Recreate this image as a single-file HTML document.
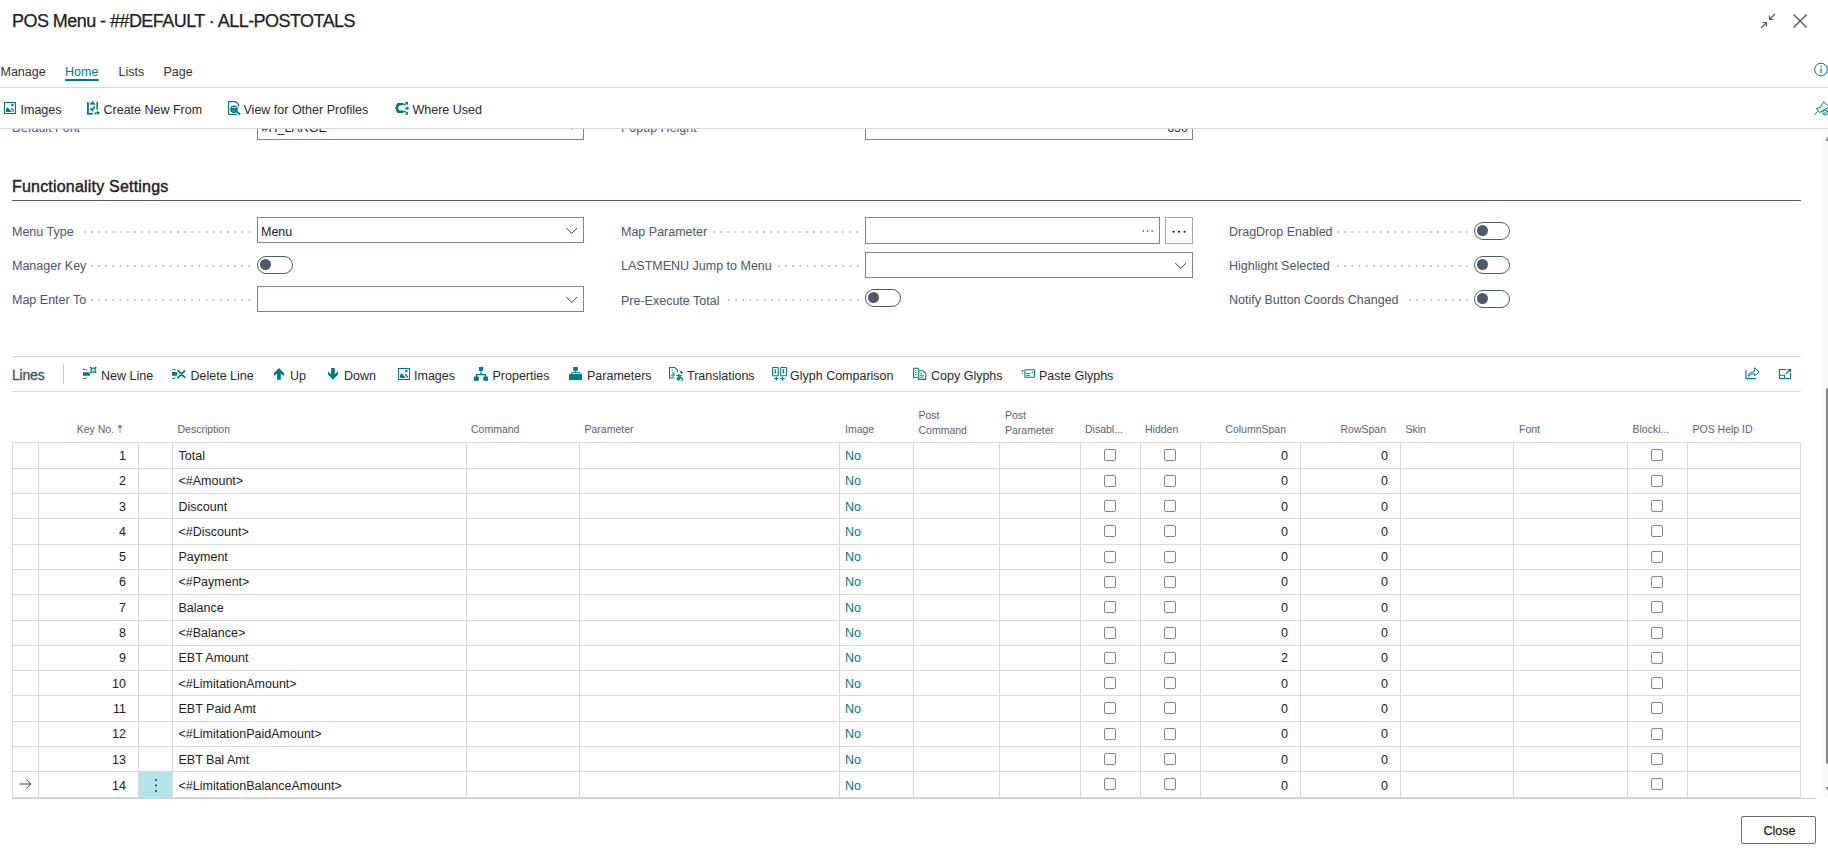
<!DOCTYPE html>
<html><head><meta charset="utf-8"><title>POS Menu</title>
<style>
html,body{margin:0;padding:0;background:#fff;}
body{width:1828px;height:864px;overflow:hidden;position:relative;font-family:"Liberation Sans",sans-serif;}
.t{position:absolute;white-space:nowrap;font-family:"Liberation Sans",sans-serif;}
.r{position:absolute;display:block;}
</style></head><body>
<div class="t" style="left:12px;top:12px;font-size:18px;line-height:18px;color:#212121;letter-spacing:-0.55px;-webkit-text-stroke:0.25px #212121;">POS Menu - ##DEFAULT · ALL-POSTOTALS</div>
<svg class="r" style="left:1760px;top:13px" width="16" height="16" viewBox="0 0 16 16"><g stroke="#5a5a5a" stroke-width="1.2" fill="none"><path d="M1 15 L6.5 9.5 M2.5 9.5 H6.5 V13.5"/><path d="M15 1 L9.5 6.5 M9.5 2.5 V6.5 H13.5"/></g></svg>
<svg class="r" style="left:1792px;top:13px" width="17" height="17" viewBox="0 0 17 17"><g stroke="#5a5a5a" stroke-width="1.4"><path d="M1.6 1.6 L14.6 14.6 M14.6 1.6 L1.6 14.6"/></g></svg>
<div class="t" style="left:0.5px;top:66px;font-size:12.5px;line-height:12.5px;color:#333;">Manage</div>
<div class="t" style="left:65px;top:66px;font-size:12.5px;line-height:12.5px;color:#007a82;">Home</div>
<div class="r" style="left:65px;top:79px;width:34px;height:2px;background:#007a82;border-radius:1px"></div>
<div class="t" style="left:118.5px;top:66px;font-size:12.5px;line-height:12.5px;color:#333;">Lists</div>
<div class="t" style="left:163.5px;top:66px;font-size:12.5px;line-height:12.5px;color:#333;">Page</div>
<svg class="r" style="left:1813px;top:62px" width="15" height="15" viewBox="0 0 15 15"><circle cx="8" cy="7.5" r="6.3" stroke="#007a82" stroke-width="1" fill="none"/><path d="M8 6.3 V11" stroke="#007a82" stroke-width="1.1"/><circle cx="8" cy="4.4" r="0.75" fill="#007a82"/></svg>
<div class="r" style="left:0px;top:87px;width:1828px;height:1px;background:#d6d9dd"></div>
<svg class="r" style="left:4px;top:102px" width="13" height="13" viewBox="0 0 13 13"><rect x="0.5" y="0.5" width="11" height="11" fill="none" stroke="#007a82" stroke-width="1"/><path d="M2 10 V7.2 L3.5 5.2 L7.6 9.6 V10 Z" fill="#007a82"/><path d="M7.6 6.6 L9.4 9" stroke="#007a82" stroke-width="1.4" stroke-linecap="round"/><circle cx="8.4" cy="3" r="1.25" fill="#007a82"/></svg>
<div class="t" style="left:20.5px;top:104px;font-size:12.5px;line-height:12.5px;color:#2a2a2a;">Images</div>
<svg class="r" style="left:84px;top:98px" width="20" height="20" viewBox="0 0 20 20"><path d="M3.9 4 V15.9 H8.8" fill="none" stroke="#007a82" stroke-width="1.9"/><path d="M13.2 4 V11.7" fill="none" stroke="#007a82" stroke-width="1.6"/><path d="M6 6.3 L7 5 H7.6 L8.4 3 L9.2 5 H10 L11.3 6.3 Z" fill="#007a82" stroke="#007a82" stroke-width="0.6"/><path d="M6.5 10.4 L8.2 12.1 L10.8 8.6" fill="none" stroke="#007a82" stroke-width="1.7"/><path d="M10.4 16.6 V15.2 Q10.6 14.2 12.2 14.2 H13 V12.8 L16.2 14.8 L13 16.8 V15.6 H12.3 Q11.8 15.6 11.8 16.6 Z" fill="#007a82"/></svg>
<div class="t" style="left:103.5px;top:104px;font-size:12.5px;line-height:12.5px;color:#2a2a2a;">Create New From</div>
<svg class="r" style="left:224px;top:98px" width="20" height="20" viewBox="0 0 20 20"><path d="M4.5 16.5 V3.6 H11.6 L14.5 6.5 V8.5" fill="none" stroke="#007a82" stroke-width="1.2"/><path d="M4.5 16.4 H12.8" fill="none" stroke="#007a82" stroke-width="1.2"/><circle cx="10" cy="11.2" r="3.8" fill="#007a82"/><path d="M8 9.6 H12" stroke="#fff" stroke-width="0.9"/><path d="M8.2 12.8 H11.8" stroke="#7fb9bc" stroke-width="0.9"/><path d="M12.8 13.8 L16.2 16.4" stroke="#007a82" stroke-width="1.9"/></svg>
<div class="t" style="left:243.5px;top:104px;font-size:12.5px;line-height:12.5px;color:#2a2a2a;">View for Other Profiles</div>
<svg class="r" style="left:392px;top:98px" width="20" height="20" viewBox="0 0 20 20"><path d="M5.3 4.9 H11.6 V7.3 H9 A2.65 2.65 0 0 0 9 12.6 H11.6 V14.9 H5.3 L3.1 9.9 Z" fill="#007a82"/><path d="M11.8 7.2 L14.6 5.2 M12.5 10.3 H15.5 M11.8 12.7 L14.6 14.8" stroke="#007a82" stroke-width="1.1" fill="none"/><path d="M12.8 4 H16 V7.2 Z M14.6 8 L17.2 10.3 L14.6 12.6 Z M12.8 16.8 H16 V13.6 Z" fill="#007a82"/></svg>
<div class="t" style="left:412.5px;top:104px;font-size:12.5px;line-height:12.5px;color:#2a2a2a;">Where Used</div>
<svg class="r" style="left:1808px;top:98px" width="20" height="20" viewBox="0 0 20 20"><path d="M6.4 16.9 L10.2 13.1" stroke="#007a82" stroke-width="1"/><path d="M8.4 10.4 L12.2 9.6 L15.6 3.9 L21 9 L16.3 11.6 L11.6 14.6 Z" fill="none" stroke="#007a82" stroke-width="1" stroke-linejoin="round"/><circle cx="17.2" cy="14.4" r="2.5" fill="#fff" stroke="#007a82" stroke-width="1"/><path d="M15.5 16.1 L18.9 12.7" stroke="#007a82" stroke-width="1"/></svg>
<div class="r" style="left:0px;top:128px;width:1828px;height:1px;background:#d6d9dd"></div>
<div class="r" style="left:0;top:129px;width:1822px;height:735px;overflow:hidden"><div class="r" style="left:0;top:-129px;width:1828px;height:864px">
<div class="t" style="left:12px;top:122px;font-size:12.5px;line-height:12.5px;color:#4b5668;">Default Font</div>
<div class="r" style="left:257px;top:113px;width:327px;height:27px;border:1px solid #7d8694;box-sizing:border-box"></div>
<div class="t" style="left:261.5px;top:122px;font-size:12.5px;line-height:12.5px;color:#212121;">#H_LARGE</div>
<svg class="r" style="left:566px;top:123px" width="12" height="8" viewBox="0 0 12 8"><path d="M0.4 1.1 L5.7 6.4 L11 1.1" fill="none" stroke="#3c3f45" stroke-width="1"/></svg>
<div class="t" style="left:621px;top:122px;font-size:12.5px;line-height:12.5px;color:#4b5668;">Popup Height</div>
<div class="r" style="left:865px;top:113px;width:328px;height:27px;border:1px solid #7d8694;box-sizing:border-box"></div>
<div class="t" style="right:640px;top:122px;font-size:12.5px;line-height:12.5px;color:#212121;">650</div>
<div class="t" style="left:12px;top:179px;font-size:16px;line-height:16px;color:#212121;letter-spacing:0.2px;-webkit-text-stroke:0.4px #212121;">Functionality Settings</div>
<div class="r" style="left:12px;top:200px;width:1789px;height:1px;background:#505c6d"></div>
<div class="t" style="left:12px;top:226px;font-size:12.5px;line-height:12.5px;color:#4b5668;">Menu Type</div>
<div class="r" style="left:84px;top:230.5px;width:166px;height:2px;background-image:radial-gradient(circle at 1px 1px,#c3c7cc 0.8px,transparent 1.2px);background-size:7.17px 2px;background-repeat:repeat-x"></div>
<div class="r" style="left:257px;top:217px;width:327px;height:26px;border:1px solid #7d8694;box-sizing:border-box"></div>
<svg class="r" style="left:566px;top:227px" width="12" height="8" viewBox="0 0 12 8"><path d="M0.4 1.1 L5.7 6.4 L11 1.1" fill="none" stroke="#3c3f45" stroke-width="1"/></svg>
<div class="t" style="left:261px;top:226px;font-size:12.5px;line-height:12.5px;color:#212121;">Menu</div>
<div class="t" style="left:12px;top:260px;font-size:12.5px;line-height:12.5px;color:#4b5668;">Manager Key</div>
<div class="r" style="left:91px;top:264.5px;width:159px;height:2px;background-image:radial-gradient(circle at 1px 1px,#c3c7cc 0.8px,transparent 1.2px);background-size:7.17px 2px;background-repeat:repeat-x"></div>
<div class="r" style="left:257px;top:256px;width:36px;height:18px;border:1.4px solid #4e5a6b;border-radius:9px;box-sizing:border-box"></div>
<div class="r" style="left:260px;top:259px;width:11px;height:11px;background:#4e5a6b;border-radius:50%"></div>
<div class="t" style="left:12px;top:294px;font-size:12.5px;line-height:12.5px;color:#4b5668;">Map Enter To</div>
<div class="r" style="left:91px;top:298.5px;width:159px;height:2px;background-image:radial-gradient(circle at 1px 1px,#c3c7cc 0.8px,transparent 1.2px);background-size:7.17px 2px;background-repeat:repeat-x"></div>
<div class="r" style="left:257px;top:286px;width:327px;height:26px;border:1px solid #7d8694;box-sizing:border-box"></div>
<svg class="r" style="left:566px;top:296px" width="12" height="8" viewBox="0 0 12 8"><path d="M0.4 1.1 L5.7 6.4 L11 1.1" fill="none" stroke="#3c3f45" stroke-width="1"/></svg>
<div class="t" style="left:621px;top:226px;font-size:12.5px;line-height:12.5px;color:#4b5668;">Map Parameter</div>
<div class="r" style="left:713px;top:230.5px;width:146px;height:2px;background-image:radial-gradient(circle at 1px 1px,#c3c7cc 0.8px,transparent 1.2px);background-size:7.17px 2px;background-repeat:repeat-x"></div>
<div class="r" style="left:865px;top:217px;width:295px;height:27px;border:1px solid #7d8694;box-sizing:border-box"></div>
<svg class="r" style="left:1141px;top:229px" width="14" height="4" viewBox="0 0 14 4"><circle cx="2.2" cy="2" r="0.75" fill="#222"/><circle cx="6.7" cy="2" r="0.75" fill="#222"/><circle cx="11.2" cy="2" r="0.75" fill="#222"/></svg>
<div class="r" style="left:1165px;top:217px;width:28px;height:27px;border:1px solid #a8a8a8;box-sizing:border-box"></div>
<svg class="r" style="left:1171px;top:229px" width="16" height="5" viewBox="0 0 16 5"><circle cx="2.5" cy="2.7" r="1.05" fill="#111"/><circle cx="8" cy="2.7" r="1.05" fill="#111"/><circle cx="13.5" cy="2.7" r="1.05" fill="#111"/></svg>
<div class="t" style="left:621px;top:260px;font-size:12.5px;line-height:12.5px;color:#4b5668;">LASTMENU Jump to Menu</div>
<div class="r" style="left:778px;top:264.5px;width:81px;height:2px;background-image:radial-gradient(circle at 1px 1px,#c3c7cc 0.8px,transparent 1.2px);background-size:7.17px 2px;background-repeat:repeat-x"></div>
<div class="r" style="left:865px;top:252px;width:328px;height:26px;border:1px solid #7d8694;box-sizing:border-box"></div>
<svg class="r" style="left:1175px;top:262px" width="12" height="8" viewBox="0 0 12 8"><path d="M0.4 1.1 L5.7 6.4 L11 1.1" fill="none" stroke="#3c3f45" stroke-width="1"/></svg>
<div class="t" style="left:621px;top:295px;font-size:12.5px;line-height:12.5px;color:#4b5668;">Pre-Execute Total</div>
<div class="r" style="left:728px;top:298.5px;width:131px;height:2px;background-image:radial-gradient(circle at 1px 1px,#c3c7cc 0.8px,transparent 1.2px);background-size:7.17px 2px;background-repeat:repeat-x"></div>
<div class="r" style="left:865px;top:289px;width:36px;height:18px;border:1.4px solid #4e5a6b;border-radius:9px;box-sizing:border-box"></div>
<div class="r" style="left:868px;top:292px;width:11px;height:11px;background:#4e5a6b;border-radius:50%"></div>
<div class="t" style="left:1229px;top:226px;font-size:12.5px;line-height:12.5px;color:#4b5668;">DragDrop Enabled</div>
<div class="r" style="left:1337px;top:230.5px;width:131px;height:2px;background-image:radial-gradient(circle at 1px 1px,#c3c7cc 0.8px,transparent 1.2px);background-size:7.17px 2px;background-repeat:repeat-x"></div>
<div class="r" style="left:1474px;top:222px;width:36px;height:18px;border:1.4px solid #4e5a6b;border-radius:9px;box-sizing:border-box"></div>
<div class="r" style="left:1477px;top:225px;width:11px;height:11px;background:#4e5a6b;border-radius:50%"></div>
<div class="t" style="left:1229px;top:260px;font-size:12.5px;line-height:12.5px;color:#4b5668;">Highlight Selected</div>
<div class="r" style="left:1337px;top:264.5px;width:131px;height:2px;background-image:radial-gradient(circle at 1px 1px,#c3c7cc 0.8px,transparent 1.2px);background-size:7.17px 2px;background-repeat:repeat-x"></div>
<div class="r" style="left:1474px;top:256px;width:36px;height:18px;border:1.4px solid #4e5a6b;border-radius:9px;box-sizing:border-box"></div>
<div class="r" style="left:1477px;top:259px;width:11px;height:11px;background:#4e5a6b;border-radius:50%"></div>
<div class="t" style="left:1229px;top:294px;font-size:12.5px;line-height:12.5px;color:#4b5668;">Notify Button Coords Changed</div>
<div class="r" style="left:1409px;top:298.5px;width:59px;height:2px;background-image:radial-gradient(circle at 1px 1px,#c3c7cc 0.8px,transparent 1.2px);background-size:7.17px 2px;background-repeat:repeat-x"></div>
<div class="r" style="left:1474px;top:290px;width:36px;height:18px;border:1.4px solid #4e5a6b;border-radius:9px;box-sizing:border-box"></div>
<div class="r" style="left:1477px;top:293px;width:11px;height:11px;background:#4e5a6b;border-radius:50%"></div>
<div class="r" style="left:12px;top:356px;width:1789px;height:1px;background:#d6d9dd"></div>
<div class="r" style="left:12px;top:391px;width:1789px;height:1px;background:#d6d9dd"></div>
<div class="t" style="left:12px;top:368px;font-size:14px;line-height:14px;color:#44505f;letter-spacing:-0.2px;-webkit-text-stroke:0.3px #44505f;">Lines</div>
<div class="r" style="left:63px;top:364px;width:1px;height:20px;background:#c8ccd1"></div>
<svg class="r" style="left:78px;top:362px" width="24" height="22" viewBox="0 0 24 22"><path d="M5.1 7.4 H7.8 Q8.6 7.4 8.7 8.6" fill="none" stroke="#007a82" stroke-width="1"/><path d="M5.1 16.6 H7.8 Q8.6 16.6 8.7 15.4" fill="none" stroke="#007a82" stroke-width="1"/><path d="M5 10.2 H10.6 L12 11.8 V13.8 H5 Z" fill="#007a82"/><rect x="13.3" y="6.2" width="3.9" height="3.9" rx="1.4" fill="none" stroke="#007a82" stroke-width="1.3"/><circle cx="12.6" cy="5.6" r="0.9" fill="#007a82"/><circle cx="17.7" cy="5.6" r="0.9" fill="#007a82"/><circle cx="12.6" cy="10.4" r="0.9" fill="#007a82"/><circle cx="17.7" cy="10.4" r="0.9" fill="#007a82"/></svg>
<div class="t" style="left:101px;top:370px;font-size:12.5px;line-height:12.5px;color:#2a2a2a;">New Line</div>
<svg class="r" style="left:168px;top:362px" width="24" height="22" viewBox="0 0 24 22"><path d="M4.1 7.4 H6.6 Q7.3 7.4 7.3 8.6" fill="none" stroke="#007a82" stroke-width="1"/><path d="M4.1 16.6 H6.6 Q7.3 16.6 7.3 15.4" fill="none" stroke="#007a82" stroke-width="1"/><path d="M4 10 H8.5 L9.8 11.9 L8.5 13.8 H4 Z" fill="#007a82"/><path d="M10 8.6 L16.8 15.4 M16.6 8.9 L10 15.6" stroke="#007a82" stroke-width="1.7" stroke-linecap="round"/></svg>
<div class="t" style="left:190.5px;top:370px;font-size:12.5px;line-height:12.5px;color:#2a2a2a;">Delete Line</div>
<svg class="r" style="left:268px;top:362px" width="24" height="22" viewBox="0 0 24 22"><path d="M11 6 L16 11.1 V14 L12.8 11.6 V17.8 H9.1 V11.6 L6 14 V11.1 Z" fill="#007a82"/></svg>
<div class="t" style="left:290px;top:370px;font-size:12.5px;line-height:12.5px;color:#2a2a2a;">Up</div>
<svg class="r" style="left:322px;top:362px" width="24" height="22" viewBox="0 0 24 22"><path d="M9.1 6 H12.8 V12.2 L16 9.6 V12.6 L11 17.8 L6 12.6 V9.6 L9.1 12.2 Z" fill="#007a82"/></svg>
<div class="t" style="left:344px;top:370px;font-size:12.5px;line-height:12.5px;color:#2a2a2a;">Down</div>
<svg class="r" style="left:398px;top:368px" width="13" height="13" viewBox="0 0 13 13"><rect x="0.5" y="0.5" width="11" height="11" fill="none" stroke="#007a82" stroke-width="1"/><path d="M2 10 V7.2 L3.5 5.2 L7.6 9.6 V10 Z" fill="#007a82"/><path d="M7.6 6.6 L9.4 9" stroke="#007a82" stroke-width="1.4" stroke-linecap="round"/><circle cx="8.4" cy="3" r="1.25" fill="#007a82"/></svg>
<div class="t" style="left:414px;top:370px;font-size:12.5px;line-height:12.5px;color:#2a2a2a;">Images</div>
<svg class="r" style="left:470px;top:362px" width="24" height="22" viewBox="0 0 24 22"><rect x="8.9" y="5" width="4.3" height="3.9" fill="#007a82"/><path d="M11.1 8.9 V12.6 M6.5 15 V12.6 H15.5 V15" fill="none" stroke="#007a82" stroke-width="1.2"/><rect x="4" y="14.6" width="4.8" height="4.2" fill="#007a82"/><rect x="13.3" y="14.6" width="4.7" height="4.2" fill="#007a82"/></svg>
<div class="t" style="left:492.5px;top:370px;font-size:12.5px;line-height:12.5px;color:#2a2a2a;">Properties</div>
<svg class="r" style="left:564px;top:362px" width="24" height="22" viewBox="0 0 24 22"><rect x="9.2" y="5" width="4.7" height="3.8" fill="#007a82"/><path d="M11.6 8.8 V10.5" stroke="#007a82" stroke-width="1.1"/><path d="M7.5 12 V10.5 H16 V12" fill="none" stroke="#007a82" stroke-width="0.9"/><rect x="5" y="12" width="13" height="6" fill="#007a82"/></svg>
<div class="t" style="left:587px;top:370px;font-size:12.5px;line-height:12.5px;color:#2a2a2a;">Parameters</div>
<svg class="r" style="left:664px;top:362px" width="24" height="22" viewBox="0 0 24 22"><path d="M10.5 16 H5.5 V5.5 H10.8 L13.5 8.2 V10.5" fill="none" stroke="#007a82" stroke-width="1.1"/><path d="M7.5 8 H9 M7.8 10.3 H9.5 Q10.2 10.5 10 12 V14 H7.8 Q7.3 12.8 8.5 12.2 H10" fill="none" stroke="#007a82" stroke-width="0.9"/><path d="M15.5 8.5 L17 10 M16.6 9 L18.8 10.5 L17.2 11.8 Z" fill="#007a82" stroke="#007a82" stroke-width="0.8"/><path d="M12.3 13.5 H17.8 M14.4 12 L15.2 18.6 M16.8 14.6 Q13 15 13 17.3 Q13.6 18.5 15.2 17 Q17 15.4 18.2 16.2 Q19.4 17.8 17.2 18.8" fill="none" stroke="#007a82" stroke-width="1.1"/></svg>
<div class="t" style="left:687px;top:370px;font-size:12.5px;line-height:12.5px;color:#2a2a2a;">Translations</div>
<svg class="r" style="left:768px;top:362px" width="24" height="22" viewBox="0 0 24 22"><rect x="4.6" y="5.5" width="5.6" height="8.3" fill="none" stroke="#007a82" stroke-width="1.1" rx="0.5"/><rect x="12.7" y="5.5" width="5.7" height="8.3" fill="none" stroke="#007a82" stroke-width="1.1" rx="0.5"/><path d="M7.3 7 V10.5 M15.5 7 V10.5" stroke="#007a82" stroke-width="1.1"/><path d="M6 10 L7.3 11.8 L8.6 10 Z M14.2 10 L15.5 11.8 L16.8 10 Z" fill="#007a82"/><path d="M8.3 14.8 V18.8 M6.1 16.5 H10.5 M14.5 14.8 V18.8 M12.3 16.5 H16.7" stroke="#007a82" stroke-width="1.1"/></svg>
<div class="t" style="left:790px;top:370px;font-size:12.5px;line-height:12.5px;color:#2a2a2a;">Glyph Comparison</div>
<svg class="r" style="left:909px;top:362px" width="24" height="22" viewBox="0 0 24 22"><path d="M9.2 15.5 H4.6 V6.3 H9.3 V8" fill="none" stroke="#007a82" stroke-width="1.1"/><path d="M6 8.6 H7.4 M6 10.5 H7.6 M6 12.5 H7.6" stroke="#007a82" stroke-width="0.9"/><path d="M9.7 8.7 H14 L16.8 11.3 V17.4 H9.7 Z" fill="none" stroke="#007a82" stroke-width="1.1"/><path d="M11.2 11.5 H12.8 M11.2 13.6 H14.8 M11.2 15.2 H14.8" stroke="#007a82" stroke-width="0.9"/></svg>
<div class="t" style="left:931px;top:370px;font-size:12.5px;line-height:12.5px;color:#2a2a2a;">Copy Glyphs</div>
<svg class="r" style="left:1017px;top:362px" width="24" height="22" viewBox="0 0 24 22"><path d="M4.2 9 H6.8" stroke="#007a82" stroke-width="1.1"/><circle cx="5.6" cy="11.6" r="0.7" fill="#007a82"/><rect x="7.9" y="7.7" width="9.7" height="7.6" rx="0.8" fill="none" stroke="#007a82" stroke-width="1.1"/><path d="M9.4 11.6 H13.6 M9.4 13.6 H12.8" stroke="#007a82" stroke-width="1"/><circle cx="15.4" cy="10.3" r="0.7" fill="#007a82"/></svg>
<div class="t" style="left:1039px;top:370px;font-size:12.5px;line-height:12.5px;color:#2a2a2a;">Paste Glyphs</div>
<svg class="r" style="left:1745px;top:366px" width="16" height="14" viewBox="0 0 16 14"><path d="M1 4.2 V12.6 H11" fill="none" stroke="#007a82" stroke-width="1.1"/><path d="M3.2 10.4 Q3.8 6 9.6 5.7 V1.8 L14.2 5.8 L9.6 9.8 V7.7 Q5.4 7.5 3.2 10.4 Z" fill="none" stroke="#007a82" stroke-width="1" stroke-linejoin="round"/></svg>
<svg class="r" style="left:1778px;top:368px" width="14" height="12" viewBox="0 0 14 12"><path d="M8.2 1.5 H1.5 V10.5 H12.5 V5.3" fill="none" stroke="#007a82" stroke-width="1.1"/><path d="M1.5 7.3 H6.6 V10.5" fill="none" stroke="#007a82" stroke-width="1.1"/><path d="M7.6 6.2 L11.6 2.2" stroke="#007a82" stroke-width="1.1"/><path d="M9.2 0.9 H13.1 V4.8 Z" fill="#007a82"/></svg>
<div class="t" style="right:1714px;top:424px;font-size:10.5px;line-height:10.5px;color:#586375;">Key No.</div>
<svg class="r" style="left:116px;top:424px" width="8" height="10" viewBox="0 0 8 10"><path d="M4 4 V9" stroke="#a0a0a0" stroke-width="1.1"/><path d="M4 0.4 L6.2 3.2 L5.6 3.8 H2.4 L1.8 3.2 Z" fill="#6c6c6c"/></svg>
<div class="t" style="left:177.5px;top:424px;font-size:10.5px;line-height:10.5px;color:#586375;">Description</div>
<div class="t" style="left:471px;top:424px;font-size:10.5px;line-height:10.5px;color:#586375;">Command</div>
<div class="t" style="left:584.5px;top:424px;font-size:10.5px;line-height:10.5px;color:#586375;">Parameter</div>
<div class="t" style="left:845px;top:424px;font-size:10.5px;line-height:10.5px;color:#586375;">Image</div>
<div class="t" style="left:1085px;top:424px;font-size:10.5px;line-height:10.5px;color:#586375;">Disabl...</div>
<div class="t" style="left:1145px;top:424px;font-size:10.5px;line-height:10.5px;color:#586375;">Hidden</div>
<div class="t" style="left:1405.5px;top:424px;font-size:10.5px;line-height:10.5px;color:#586375;">Skin</div>
<div class="t" style="left:1519px;top:424px;font-size:10.5px;line-height:10.5px;color:#586375;">Font</div>
<div class="t" style="left:1632.5px;top:424px;font-size:10.5px;line-height:10.5px;color:#586375;">Blocki...</div>
<div class="t" style="left:1692.5px;top:424px;font-size:10.5px;line-height:10.5px;color:#586375;">POS Help ID</div>
<div class="t" style="left:918.5px;top:410px;font-size:10.5px;line-height:10.5px;color:#586375;">Post</div>
<div class="t" style="left:918.5px;top:425px;font-size:10.5px;line-height:10.5px;color:#586375;">Command</div>
<div class="t" style="left:1005px;top:410px;font-size:10.5px;line-height:10.5px;color:#586375;">Post</div>
<div class="t" style="left:1005px;top:425px;font-size:10.5px;line-height:10.5px;color:#586375;">Parameter</div>
<div class="t" style="right:542px;top:424px;font-size:10.5px;line-height:10.5px;color:#586375;">ColumnSpan</div>
<div class="t" style="right:442px;top:424px;font-size:10.5px;line-height:10.5px;color:#586375;">RowSpan</div>
<div class="r" style="left:139px;top:772px;width:33px;height:25px;background:#b3e4e9"></div>
<div class="r" style="left:12px;top:442px;width:1789px;height:1px;background:#d5d9de"></div>
<div class="r" style="left:12px;top:468px;width:1789px;height:1px;background:#d5d9de"></div>
<div class="r" style="left:12px;top:493px;width:1789px;height:1px;background:#d5d9de"></div>
<div class="r" style="left:12px;top:518px;width:1789px;height:1px;background:#d5d9de"></div>
<div class="r" style="left:12px;top:544px;width:1789px;height:1px;background:#d5d9de"></div>
<div class="r" style="left:12px;top:569px;width:1789px;height:1px;background:#d5d9de"></div>
<div class="r" style="left:12px;top:594px;width:1789px;height:1px;background:#d5d9de"></div>
<div class="r" style="left:12px;top:620px;width:1789px;height:1px;background:#d5d9de"></div>
<div class="r" style="left:12px;top:645px;width:1789px;height:1px;background:#d5d9de"></div>
<div class="r" style="left:12px;top:670px;width:1789px;height:1px;background:#d5d9de"></div>
<div class="r" style="left:12px;top:695px;width:1789px;height:1px;background:#d5d9de"></div>
<div class="r" style="left:12px;top:721px;width:1789px;height:1px;background:#d5d9de"></div>
<div class="r" style="left:12px;top:746px;width:1789px;height:1px;background:#d5d9de"></div>
<div class="r" style="left:12px;top:771px;width:1789px;height:1px;background:#d5d9de"></div>
<div class="r" style="left:12px;top:797px;width:1789px;height:1px;background:#d5d9de"></div>
<div class="r" style="left:12px;top:798px;width:1804px;height:1px;background:#cbcfd4"></div>
<div class="r" style="left:12px;top:442px;width:1px;height:355px;background:#d5d9de"></div>
<div class="r" style="left:38px;top:442px;width:1px;height:355px;background:#d5d9de"></div>
<div class="r" style="left:138px;top:442px;width:1px;height:355px;background:#d5d9de"></div>
<div class="r" style="left:172px;top:442px;width:1px;height:355px;background:#d5d9de"></div>
<div class="r" style="left:466px;top:442px;width:1px;height:355px;background:#d5d9de"></div>
<div class="r" style="left:579px;top:442px;width:1px;height:355px;background:#d5d9de"></div>
<div class="r" style="left:839px;top:442px;width:1px;height:355px;background:#d5d9de"></div>
<div class="r" style="left:913px;top:442px;width:1px;height:355px;background:#d5d9de"></div>
<div class="r" style="left:999px;top:442px;width:1px;height:355px;background:#d5d9de"></div>
<div class="r" style="left:1080px;top:442px;width:1px;height:355px;background:#d5d9de"></div>
<div class="r" style="left:1140px;top:442px;width:1px;height:355px;background:#d5d9de"></div>
<div class="r" style="left:1200px;top:442px;width:1px;height:355px;background:#d5d9de"></div>
<div class="r" style="left:1300px;top:442px;width:1px;height:355px;background:#d5d9de"></div>
<div class="r" style="left:1400px;top:442px;width:1px;height:355px;background:#d5d9de"></div>
<div class="r" style="left:1513px;top:442px;width:1px;height:355px;background:#d5d9de"></div>
<div class="r" style="left:1627px;top:442px;width:1px;height:355px;background:#d5d9de"></div>
<div class="r" style="left:1687px;top:442px;width:1px;height:355px;background:#d5d9de"></div>
<div class="r" style="left:1800px;top:442px;width:1px;height:355px;background:#d5d9de"></div>
<div class="t" style="right:1702px;top:450px;font-size:12.5px;line-height:12.5px;color:#212121;">1</div>
<div class="t" style="left:178.5px;top:450px;font-size:12.5px;line-height:12.5px;color:#212121;">Total</div>
<div class="t" style="left:845px;top:450px;font-size:12.5px;line-height:12.5px;color:#007a82;">No</div>
<div class="t" style="right:540px;top:450px;font-size:12.5px;line-height:12.5px;color:#212121;">0</div>
<div class="t" style="right:440px;top:450px;font-size:12.5px;line-height:12.5px;color:#212121;">0</div>
<div class="r" style="left:1104px;top:449px;width:12px;height:12px;border:1px solid #858585;border-radius:2px;box-sizing:border-box"></div>
<div class="r" style="left:1164px;top:449px;width:12px;height:12px;border:1px solid #858585;border-radius:2px;box-sizing:border-box"></div>
<div class="r" style="left:1651px;top:449px;width:12px;height:12px;border:1px solid #858585;border-radius:2px;box-sizing:border-box"></div>
<div class="t" style="right:1702px;top:475px;font-size:12.5px;line-height:12.5px;color:#212121;">2</div>
<div class="t" style="left:178.5px;top:475px;font-size:12.5px;line-height:12.5px;color:#212121;">&lt;#Amount&gt;</div>
<div class="t" style="left:845px;top:475px;font-size:12.5px;line-height:12.5px;color:#007a82;">No</div>
<div class="t" style="right:540px;top:475px;font-size:12.5px;line-height:12.5px;color:#212121;">0</div>
<div class="t" style="right:440px;top:475px;font-size:12.5px;line-height:12.5px;color:#212121;">0</div>
<div class="r" style="left:1104px;top:475px;width:12px;height:12px;border:1px solid #858585;border-radius:2px;box-sizing:border-box"></div>
<div class="r" style="left:1164px;top:475px;width:12px;height:12px;border:1px solid #858585;border-radius:2px;box-sizing:border-box"></div>
<div class="r" style="left:1651px;top:475px;width:12px;height:12px;border:1px solid #858585;border-radius:2px;box-sizing:border-box"></div>
<div class="t" style="right:1702px;top:501px;font-size:12.5px;line-height:12.5px;color:#212121;">3</div>
<div class="t" style="left:178.5px;top:501px;font-size:12.5px;line-height:12.5px;color:#212121;">Discount</div>
<div class="t" style="left:845px;top:501px;font-size:12.5px;line-height:12.5px;color:#007a82;">No</div>
<div class="t" style="right:540px;top:501px;font-size:12.5px;line-height:12.5px;color:#212121;">0</div>
<div class="t" style="right:440px;top:501px;font-size:12.5px;line-height:12.5px;color:#212121;">0</div>
<div class="r" style="left:1104px;top:500px;width:12px;height:12px;border:1px solid #858585;border-radius:2px;box-sizing:border-box"></div>
<div class="r" style="left:1164px;top:500px;width:12px;height:12px;border:1px solid #858585;border-radius:2px;box-sizing:border-box"></div>
<div class="r" style="left:1651px;top:500px;width:12px;height:12px;border:1px solid #858585;border-radius:2px;box-sizing:border-box"></div>
<div class="t" style="right:1702px;top:526px;font-size:12.5px;line-height:12.5px;color:#212121;">4</div>
<div class="t" style="left:178.5px;top:526px;font-size:12.5px;line-height:12.5px;color:#212121;">&lt;#Discount&gt;</div>
<div class="t" style="left:845px;top:526px;font-size:12.5px;line-height:12.5px;color:#007a82;">No</div>
<div class="t" style="right:540px;top:526px;font-size:12.5px;line-height:12.5px;color:#212121;">0</div>
<div class="t" style="right:440px;top:526px;font-size:12.5px;line-height:12.5px;color:#212121;">0</div>
<div class="r" style="left:1104px;top:525px;width:12px;height:12px;border:1px solid #858585;border-radius:2px;box-sizing:border-box"></div>
<div class="r" style="left:1164px;top:525px;width:12px;height:12px;border:1px solid #858585;border-radius:2px;box-sizing:border-box"></div>
<div class="r" style="left:1651px;top:525px;width:12px;height:12px;border:1px solid #858585;border-radius:2px;box-sizing:border-box"></div>
<div class="t" style="right:1702px;top:551px;font-size:12.5px;line-height:12.5px;color:#212121;">5</div>
<div class="t" style="left:178.5px;top:551px;font-size:12.5px;line-height:12.5px;color:#212121;">Payment</div>
<div class="t" style="left:845px;top:551px;font-size:12.5px;line-height:12.5px;color:#007a82;">No</div>
<div class="t" style="right:540px;top:551px;font-size:12.5px;line-height:12.5px;color:#212121;">0</div>
<div class="t" style="right:440px;top:551px;font-size:12.5px;line-height:12.5px;color:#212121;">0</div>
<div class="r" style="left:1104px;top:551px;width:12px;height:12px;border:1px solid #858585;border-radius:2px;box-sizing:border-box"></div>
<div class="r" style="left:1164px;top:551px;width:12px;height:12px;border:1px solid #858585;border-radius:2px;box-sizing:border-box"></div>
<div class="r" style="left:1651px;top:551px;width:12px;height:12px;border:1px solid #858585;border-radius:2px;box-sizing:border-box"></div>
<div class="t" style="right:1702px;top:576px;font-size:12.5px;line-height:12.5px;color:#212121;">6</div>
<div class="t" style="left:178.5px;top:576px;font-size:12.5px;line-height:12.5px;color:#212121;">&lt;#Payment&gt;</div>
<div class="t" style="left:845px;top:576px;font-size:12.5px;line-height:12.5px;color:#007a82;">No</div>
<div class="t" style="right:540px;top:576px;font-size:12.5px;line-height:12.5px;color:#212121;">0</div>
<div class="t" style="right:440px;top:576px;font-size:12.5px;line-height:12.5px;color:#212121;">0</div>
<div class="r" style="left:1104px;top:576px;width:12px;height:12px;border:1px solid #858585;border-radius:2px;box-sizing:border-box"></div>
<div class="r" style="left:1164px;top:576px;width:12px;height:12px;border:1px solid #858585;border-radius:2px;box-sizing:border-box"></div>
<div class="r" style="left:1651px;top:576px;width:12px;height:12px;border:1px solid #858585;border-radius:2px;box-sizing:border-box"></div>
<div class="t" style="right:1702px;top:602px;font-size:12.5px;line-height:12.5px;color:#212121;">7</div>
<div class="t" style="left:178.5px;top:602px;font-size:12.5px;line-height:12.5px;color:#212121;">Balance</div>
<div class="t" style="left:845px;top:602px;font-size:12.5px;line-height:12.5px;color:#007a82;">No</div>
<div class="t" style="right:540px;top:602px;font-size:12.5px;line-height:12.5px;color:#212121;">0</div>
<div class="t" style="right:440px;top:602px;font-size:12.5px;line-height:12.5px;color:#212121;">0</div>
<div class="r" style="left:1104px;top:601px;width:12px;height:12px;border:1px solid #858585;border-radius:2px;box-sizing:border-box"></div>
<div class="r" style="left:1164px;top:601px;width:12px;height:12px;border:1px solid #858585;border-radius:2px;box-sizing:border-box"></div>
<div class="r" style="left:1651px;top:601px;width:12px;height:12px;border:1px solid #858585;border-radius:2px;box-sizing:border-box"></div>
<div class="t" style="right:1702px;top:627px;font-size:12.5px;line-height:12.5px;color:#212121;">8</div>
<div class="t" style="left:178.5px;top:627px;font-size:12.5px;line-height:12.5px;color:#212121;">&lt;#Balance&gt;</div>
<div class="t" style="left:845px;top:627px;font-size:12.5px;line-height:12.5px;color:#007a82;">No</div>
<div class="t" style="right:540px;top:627px;font-size:12.5px;line-height:12.5px;color:#212121;">0</div>
<div class="t" style="right:440px;top:627px;font-size:12.5px;line-height:12.5px;color:#212121;">0</div>
<div class="r" style="left:1104px;top:627px;width:12px;height:12px;border:1px solid #858585;border-radius:2px;box-sizing:border-box"></div>
<div class="r" style="left:1164px;top:627px;width:12px;height:12px;border:1px solid #858585;border-radius:2px;box-sizing:border-box"></div>
<div class="r" style="left:1651px;top:627px;width:12px;height:12px;border:1px solid #858585;border-radius:2px;box-sizing:border-box"></div>
<div class="t" style="right:1702px;top:652px;font-size:12.5px;line-height:12.5px;color:#212121;">9</div>
<div class="t" style="left:178.5px;top:652px;font-size:12.5px;line-height:12.5px;color:#212121;">EBT Amount</div>
<div class="t" style="left:845px;top:652px;font-size:12.5px;line-height:12.5px;color:#007a82;">No</div>
<div class="t" style="right:540px;top:652px;font-size:12.5px;line-height:12.5px;color:#212121;">2</div>
<div class="t" style="right:440px;top:652px;font-size:12.5px;line-height:12.5px;color:#212121;">0</div>
<div class="r" style="left:1104px;top:652px;width:12px;height:12px;border:1px solid #858585;border-radius:2px;box-sizing:border-box"></div>
<div class="r" style="left:1164px;top:652px;width:12px;height:12px;border:1px solid #858585;border-radius:2px;box-sizing:border-box"></div>
<div class="r" style="left:1651px;top:652px;width:12px;height:12px;border:1px solid #858585;border-radius:2px;box-sizing:border-box"></div>
<div class="t" style="right:1702px;top:678px;font-size:12.5px;line-height:12.5px;color:#212121;">10</div>
<div class="t" style="left:178.5px;top:678px;font-size:12.5px;line-height:12.5px;color:#212121;">&lt;#LimitationAmount&gt;</div>
<div class="t" style="left:845px;top:678px;font-size:12.5px;line-height:12.5px;color:#007a82;">No</div>
<div class="t" style="right:540px;top:678px;font-size:12.5px;line-height:12.5px;color:#212121;">0</div>
<div class="t" style="right:440px;top:678px;font-size:12.5px;line-height:12.5px;color:#212121;">0</div>
<div class="r" style="left:1104px;top:677px;width:12px;height:12px;border:1px solid #858585;border-radius:2px;box-sizing:border-box"></div>
<div class="r" style="left:1164px;top:677px;width:12px;height:12px;border:1px solid #858585;border-radius:2px;box-sizing:border-box"></div>
<div class="r" style="left:1651px;top:677px;width:12px;height:12px;border:1px solid #858585;border-radius:2px;box-sizing:border-box"></div>
<div class="t" style="right:1702px;top:703px;font-size:12.5px;line-height:12.5px;color:#212121;">11</div>
<div class="t" style="left:178.5px;top:703px;font-size:12.5px;line-height:12.5px;color:#212121;">EBT Paid Amt</div>
<div class="t" style="left:845px;top:703px;font-size:12.5px;line-height:12.5px;color:#007a82;">No</div>
<div class="t" style="right:540px;top:703px;font-size:12.5px;line-height:12.5px;color:#212121;">0</div>
<div class="t" style="right:440px;top:703px;font-size:12.5px;line-height:12.5px;color:#212121;">0</div>
<div class="r" style="left:1104px;top:702px;width:12px;height:12px;border:1px solid #858585;border-radius:2px;box-sizing:border-box"></div>
<div class="r" style="left:1164px;top:702px;width:12px;height:12px;border:1px solid #858585;border-radius:2px;box-sizing:border-box"></div>
<div class="r" style="left:1651px;top:702px;width:12px;height:12px;border:1px solid #858585;border-radius:2px;box-sizing:border-box"></div>
<div class="t" style="right:1702px;top:728px;font-size:12.5px;line-height:12.5px;color:#212121;">12</div>
<div class="t" style="left:178.5px;top:728px;font-size:12.5px;line-height:12.5px;color:#212121;">&lt;#LimitationPaidAmount&gt;</div>
<div class="t" style="left:845px;top:728px;font-size:12.5px;line-height:12.5px;color:#007a82;">No</div>
<div class="t" style="right:540px;top:728px;font-size:12.5px;line-height:12.5px;color:#212121;">0</div>
<div class="t" style="right:440px;top:728px;font-size:12.5px;line-height:12.5px;color:#212121;">0</div>
<div class="r" style="left:1104px;top:728px;width:12px;height:12px;border:1px solid #858585;border-radius:2px;box-sizing:border-box"></div>
<div class="r" style="left:1164px;top:728px;width:12px;height:12px;border:1px solid #858585;border-radius:2px;box-sizing:border-box"></div>
<div class="r" style="left:1651px;top:728px;width:12px;height:12px;border:1px solid #858585;border-radius:2px;box-sizing:border-box"></div>
<div class="t" style="right:1702px;top:754px;font-size:12.5px;line-height:12.5px;color:#212121;">13</div>
<div class="t" style="left:178.5px;top:754px;font-size:12.5px;line-height:12.5px;color:#212121;">EBT Bal Amt</div>
<div class="t" style="left:845px;top:754px;font-size:12.5px;line-height:12.5px;color:#007a82;">No</div>
<div class="t" style="right:540px;top:754px;font-size:12.5px;line-height:12.5px;color:#212121;">0</div>
<div class="t" style="right:440px;top:754px;font-size:12.5px;line-height:12.5px;color:#212121;">0</div>
<div class="r" style="left:1104px;top:753px;width:12px;height:12px;border:1px solid #858585;border-radius:2px;box-sizing:border-box"></div>
<div class="r" style="left:1164px;top:753px;width:12px;height:12px;border:1px solid #858585;border-radius:2px;box-sizing:border-box"></div>
<div class="r" style="left:1651px;top:753px;width:12px;height:12px;border:1px solid #858585;border-radius:2px;box-sizing:border-box"></div>
<div class="t" style="right:1702px;top:780px;font-size:12.5px;line-height:12.5px;color:#212121;">14</div>
<div class="t" style="left:178.5px;top:780px;font-size:12.5px;line-height:12.5px;color:#212121;">&lt;#LimitationBalanceAmount&gt;</div>
<div class="t" style="left:845px;top:780px;font-size:12.5px;line-height:12.5px;color:#007a82;">No</div>
<div class="t" style="right:540px;top:780px;font-size:12.5px;line-height:12.5px;color:#212121;">0</div>
<div class="t" style="right:440px;top:780px;font-size:12.5px;line-height:12.5px;color:#212121;">0</div>
<div class="r" style="left:1104px;top:778px;width:12px;height:12px;border:1px solid #858585;border-radius:2px;box-sizing:border-box"></div>
<div class="r" style="left:1164px;top:778px;width:12px;height:12px;border:1px solid #858585;border-radius:2px;box-sizing:border-box"></div>
<div class="r" style="left:1651px;top:778px;width:12px;height:12px;border:1px solid #858585;border-radius:2px;box-sizing:border-box"></div>
<svg class="r" style="left:19px;top:779px" width="13" height="10" viewBox="0 0 13 10"><path d="M0.5 5 H12 M7.5 0.8 L12 5 L7.5 9.2" fill="none" stroke="#444" stroke-width="1"/></svg>
<svg class="r" style="left:153.5px;top:777px" width="4" height="16" viewBox="0 0 4 16"><circle cx="2" cy="3" r="0.95" fill="#222"/><circle cx="2" cy="8.5" r="0.95" fill="#222"/><circle cx="2" cy="14" r="0.95" fill="#222"/></svg>
</div></div>
<div class="r" style="left:1823px;top:130px;width:5px;height:668px;background:#f9f9f9"></div>
<div class="r" style="left:1826px;top:388px;width:2px;height:376px;background:#878787;border-radius:2px 0 0 2px"></div>
<svg class="r" style="left:1825px;top:136px" width="3" height="5" viewBox="0 0 3 5"><path d="M3 0.3 L0.5 4.7 H3 Z" fill="#7a7a7a"/></svg>
<svg class="r" style="left:1825px;top:787px" width="3" height="4" viewBox="0 0 3 4"><path d="M0.5 0 H3 V4 Z" fill="#7a7a7a"/></svg>
<div class="r" style="left:1741px;top:816px;width:75px;height:28px;border:1px solid #6b6b6b;border-radius:2px;box-sizing:border-box;background:#fff"></div>
<div class="t" style="left:1763.5px;top:825px;font-size:12.5px;line-height:12.5px;color:#212121;-webkit-text-stroke:0.25px #212121;">Close</div>
</body></html>
